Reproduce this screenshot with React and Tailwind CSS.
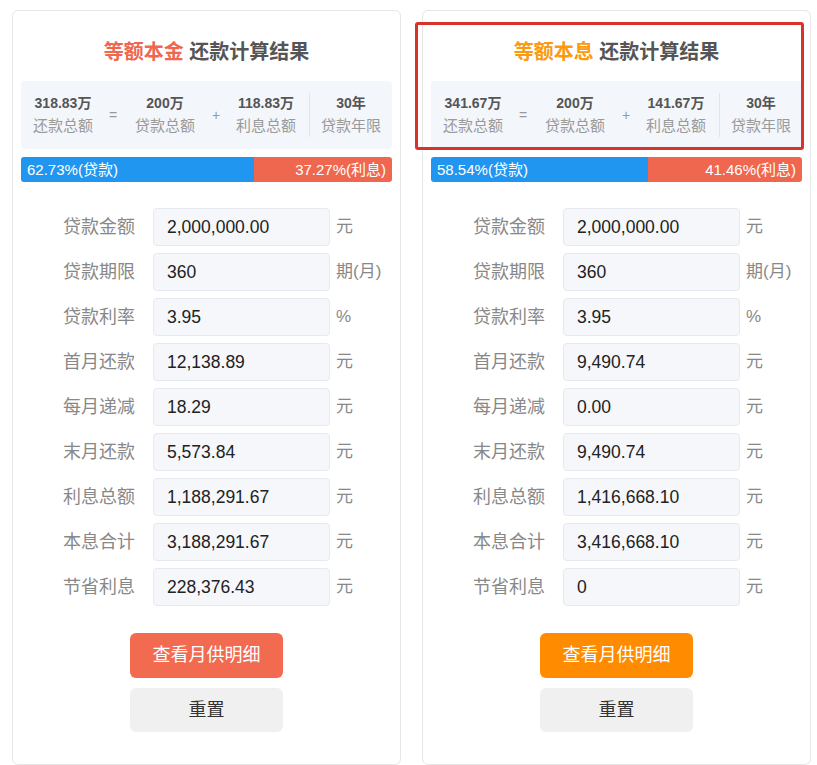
import React from "react";

const cards = [
  {
    kind: "等额本金",
    accent: "text-[#f0674f]",
    btn: "bg-[#f26a50]",
    total: "318.83万",
    loan: "200万",
    interest: "118.83万",
    years: "30年",
    loanPct: 62.73,
    intPct: 37.27,
    rows: [
      ["贷款金额", "2,000,000.00", "元"],
      ["贷款期限", "360", "期(月)"],
      ["贷款利率", "3.95", "%"],
      ["首月还款", "12,138.89", "元"],
      ["每月递减", "18.29", "元"],
      ["末月还款", "5,573.84", "元"],
      ["利息总额", "1,188,291.67", "元"],
      ["本息合计", "3,188,291.67", "元"],
      ["节省利息", "228,376.43", "元"],
    ],
  },
  {
    kind: "等额本息",
    accent: "text-[#fa9a10]",
    btn: "bg-[#ff8c00]",
    total: "341.67万",
    loan: "200万",
    interest: "141.67万",
    years: "30年",
    loanPct: 58.54,
    intPct: 41.46,
    highlight: true,
    rows: [
      ["贷款金额", "2,000,000.00", "元"],
      ["贷款期限", "360", "期(月)"],
      ["贷款利率", "3.95", "%"],
      ["首月还款", "9,490.74", "元"],
      ["每月递减", "0.00", "元"],
      ["末月还款", "9,490.74", "元"],
      ["利息总额", "1,416,668.10", "元"],
      ["本息合计", "3,416,668.10", "元"],
      ["节省利息", "0", "元"],
    ],
  },
];

const Stat = ({ value, label }) => (
  <div className="flex flex-col items-center">
    <span className="text-[14px] font-bold text-[#555] leading-[18px]">{value}</span>
    <span className="text-[15px] text-[#9a9a9a] leading-[20px] mt-[4px]">{label}</span>
  </div>
);

const Card = ({ c }) => (
  <div className="relative w-[389px] shrink-0 bg-white border border-[#e6e6e6] rounded-[6px] pt-[27px] pb-[31px]">
    {c.highlight && (
      <div className="absolute left-[-8px] top-[11px] w-[389px] h-[128px] border-[3px] border-[#d8322a] rounded-[3px]" />
    )}
    <h2 className="text-center text-[20px] font-bold leading-[28px] text-[#555]">
      <span className={c.accent}>{c.kind}</span> 还款计算结果
    </h2>

    {/* summary */}
    <div className="mx-[8px] mt-[15px] h-[68px] bg-[#f3f6fa] rounded-[4px] grid grid-cols-[84px_16px_88px_14px_86px_1px_1fr] items-center text-[#999]">
      <Stat value={c.total} label="还款总额" />
      <span className="text-center text-[14px]">=</span>
      <Stat value={c.loan} label="贷款总额" />
      <span className="text-center text-[14px]">+</span>
      <Stat value={c.interest} label="利息总额" />
      <div className="h-[44px] bg-[#e2e5ea]" />
      <Stat value={c.years} label="贷款年限" />
    </div>

    {/* ratio bar */}
    <div className="mx-[8px] mt-[8px] h-[25px] flex rounded-[3px] overflow-hidden text-white text-[15px] leading-[25px]">
      <div className="bg-[#2196f0] pl-[6px]" style={{ width: `${c.loanPct}%` }}>
        {c.loanPct}%(贷款)
      </div>
      <div className="flex-1 bg-[#f0674f] text-right pr-[6px]">{c.intPct}%(利息)</div>
    </div>

    {/* form rows */}
    <div className="mt-[26px] pl-[50px] flex flex-col gap-[7px]">
      {c.rows.map(([label, value, unit]) => (
        <div key={label} className="flex items-center h-[38px]">
          <span className="w-[72px] text-[18px] text-[#888]">{label}</span>
          <div className="ml-[18px] w-[177px] h-[38px] bg-[#f5f7fa] border border-[#e6eaf0] rounded-[4px] pl-[13px] flex items-center text-[17.5px] text-[#222]">
            {value}
          </div>
          <span className="ml-[6px] text-[17px] text-[#888]">{unit}</span>
        </div>
      ))}
    </div>

    {/* buttons */}
    <div className="mt-[27px] flex flex-col items-center gap-[10px]">
      <button className={`w-[153px] h-[45px] rounded-[6px] ${c.btn} text-white text-[18px]`}>
        查看月供明细
      </button>
      <button className="w-[153px] h-[44px] rounded-[6px] bg-[#f0f0f0] text-[#333] text-[18px]">
        重置
      </button>
    </div>
  </div>
);

export default function App() {
  return (
    <div
      className="w-[817px] h-[765px] overflow-hidden bg-white flex gap-[21px] pl-[12px] pt-[10px]"
      style={{ fontFamily: '"Liberation Sans", "Noto Sans CJK SC", sans-serif' }}
    >
      {cards.map((c) => (
        <Card key={c.kind} c={c} />
      ))}
    </div>
  );
}
